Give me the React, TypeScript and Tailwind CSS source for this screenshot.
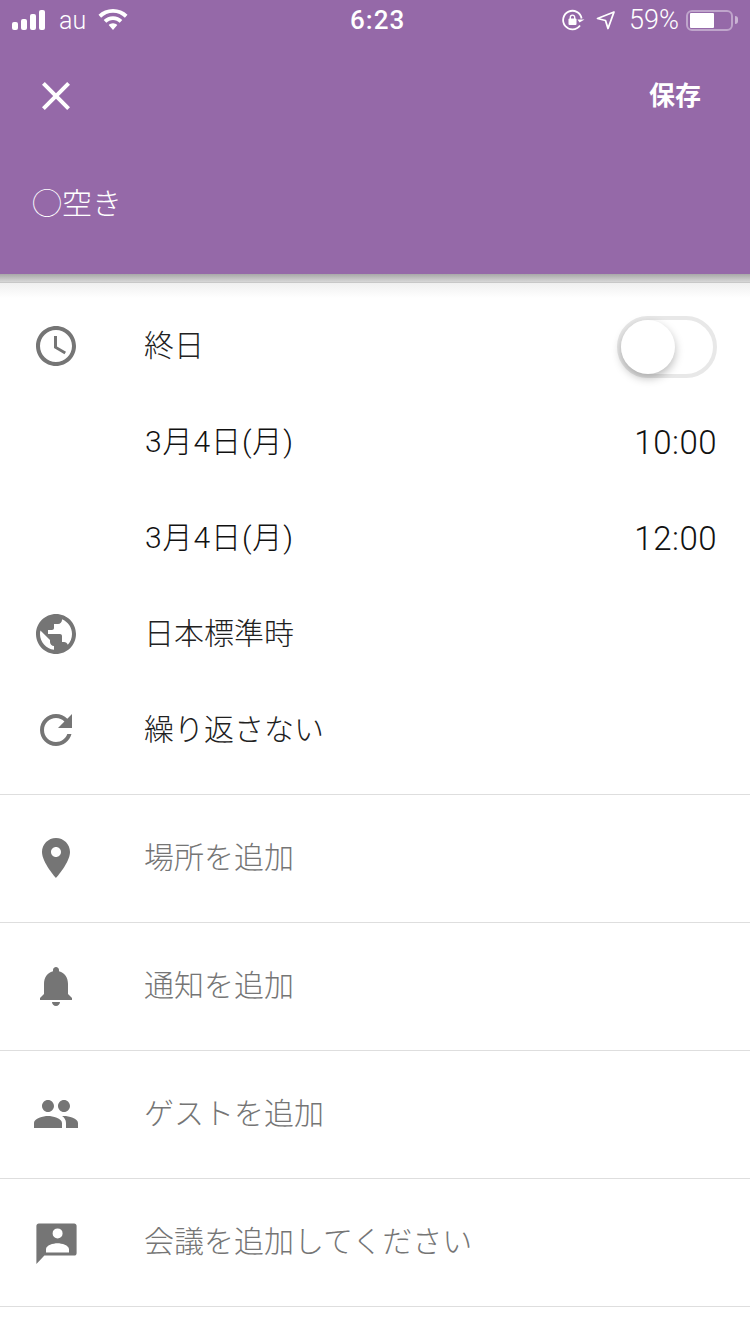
import React from "react";

const font = "font-['Roboto','Noto_Sans_CJK_JP',sans-serif]";

const paths = {
  clock:
    "M11.99 2C6.47 2 2 6.48 2 12s4.47 10 9.99 10C17.52 22 22 17.52 22 12S17.52 2 11.99 2zM12 20c-4.42 0-8-3.58-8-8s3.58-8 8-8 8 3.58 8 8-3.58 8-8 8zM12.5 7H11v6l5.25 3.15.75-1.23-4.5-2.67z",
  globe:
    "M12 2C6.48 2 2 6.48 2 12s4.48 10 10 10 10-4.48 10-10S17.52 2 12 2zm-1 17.93c-3.95-.49-7-3.85-7-7.93 0-.62.08-1.21.21-1.79L9 15v1c0 1.1.9 2 2 2v1.93zm6.9-2.54c-.26-.81-1-1.39-1.9-1.39h-1v-3c0-.55-.45-1-1-1H8v-2h2c.55 0 1-.45 1-1V7h2c1.1 0 2-.9 2-2v-.41c2.93 1.19 5 4.06 5 7.41 0 2.08-.8 3.97-2.1 5.39z",
  refresh:
    "M17.65 6.35C16.2 4.9 14.21 4 12 4c-4.42 0-7.99 3.58-7.99 8s3.57 8 7.99 8c3.73 0 6.84-2.55 7.73-6h-2.08c-.82 2.33-3.04 4-5.65 4-3.31 0-6-2.69-6-6s2.69-6 6-6c1.66 0 3.14.69 4.22 1.78L13 11h7V4l-2.35 2.35z",
  place:
    "M12 2C8.13 2 5 5.13 5 9c0 5.25 7 13 7 13s7-7.75 7-13c0-3.87-3.13-7-7-7zm0 9.5c-1.38 0-2.5-1.12-2.5-2.5s1.12-2.5 2.5-2.5 2.5 1.12 2.5 2.5-1.12 2.5-2.5 2.5z",
  bell:
    "M12 22c1.1 0 2-.9 2-2h-4c0 1.1.89 2 2 2zm6-6v-5c0-3.07-1.64-5.64-4.5-6.32V4c0-.83-.67-1.5-1.5-1.5s-1.5.67-1.5 1.5v.68C7.63 5.36 6 7.92 6 11v5l-2 2v1h16v-1l-2-2z",
  people:
    "M16 11c1.66 0 2.99-1.34 2.99-3S17.66 5 16 5c-1.66 0-3 1.34-3 3s1.34 3 3 3zm-8 0c1.66 0 2.99-1.34 2.99-3S9.66 5 8 5C6.34 5 5 6.34 5 8s1.34 3 3 3zm0 2c-2.33 0-7 1.17-7 3.5V19h14v-2.5c0-2.33-4.67-3.5-7-3.5zm8 0c-.29 0-.62.02-.97.05 1.16.84 1.97 1.97 1.97 3.45V19h6v-2.5c0-2.33-4.67-3.5-7-3.5z",
  meet:
    "M3.4 2.7h17.7c.7 0 1.2.5 1.2 1.2v13.7c0 .7-.5 1.2-1.2 1.2H6.2L2.2 23V3.9c0-.7.5-1.2 1.2-1.2zM12.8 5.2a2.5 2.5 0 1 0 0 5 2.5 2.5 0 0 0 0-5zM7 17.2h11.5v-1.6c0-2-3.6-3-5.75-3S7 13.600 7 15.600z",
};

function Icon({ d }: { d: string }) {
  return (
    <svg viewBox="0 0 24 24" className="h-12 w-12 shrink-0 fill-[#757575]" fillRule="evenodd">
      <path d={d} />
    </svg>
  );
}

function Row({ icon, text, right }: { icon?: string; text: string; right?: React.ReactNode }) {
  return (
    <div className="flex h-24 items-center pl-8 pr-[33px]">
      <div className="h-12 w-12 shrink-0">{icon && <Icon d={icon} />}</div>
      <div className="ml-[64px] flex-1 text-[30px] leading-none font-light text-[#212121]">
        {text}
      </div>
      {right}
    </div>
  );
}

function AddRow({ icon, text }: { icon: string; text: string }) {
  return (
    <div className="flex h-[128px] items-center border-b border-[#dedede] pb-[1px] pl-8">
      <Icon d={icon} />
      <div className="ml-[64px] text-[30px] leading-none font-light text-[#757575]">{text}</div>
    </div>
  );
}

function DateRow({ time }: { time: string }) {
  return (
    <div className="flex h-24 items-center pl-8 pr-[33px]">
      <div className="ml-[113px] flex-1 text-[30px] leading-none font-light tracking-[0.9px] text-[#111111]">
        3月4日(月)
      </div>
      <span className="mt-[1px] text-[33px] leading-none font-light tracking-[0.5px] text-[#111111]">
        {time}
      </span>
    </div>
  );
}

function StatusBar() {
  return (
    <div className="relative flex h-10 items-center justify-between pl-3 pr-[12px] text-white">
      <div className="flex items-center">
        <div className="flex items-end gap-[3px]">
          <div className="h-[8px] w-[6px] rounded-[2px] bg-white" />
          <div className="h-[11px] w-[6px] rounded-[2px] bg-white" />
          <div className="h-[16px] w-[6px] rounded-[2px] bg-white" />
          <div className="h-[20px] w-[6px] rounded-[2px] bg-white" />
        </div>
        <span className="ml-[14px] text-[25px] leading-none font-light">au</span>
        <svg viewBox="0 0 30 22" className="ml-[12px] h-[22px] w-[30px] fill-white">
          <path d="M15 0C9.300 0 4.200 2.200.5 5.800l2.600 2.900C6.200 5.600 10.400 3.700 15 3.700s8.800 1.900 11.900 5l2.600-2.900C25.800 2.200 20.700 0 15 0z" />
          <path d="M15 7.200c-3.600 0-6.900 1.500-9.300 3.800l2.600 2.800c1.700-1.700 4.100-2.800 6.700-2.800s5 1.100 6.700 2.800l2.600-2.800c-2.400-2.300-5.700-3.800-9.300-3.800z" />
          <path d="M15 14.300c-1.700 0-3.200.7-4.300 1.700L15 21l4.300-5c-1.100-1-2.600-1.700-4.300-1.700z" />
        </svg>
      </div>
      <span className="absolute left-[350px] text-[26px] leading-none font-medium tracking-[1px]">
        6:23
      </span>
      <div className="flex items-center">
        <svg viewBox="0 0 24 24" className="h-6 w-6 fill-none stroke-white stroke-[1.8]">
          <path d="M20.600 10.500A9.300 9.300 0 1 0 19 17.500" />
          <path d="M18.500 14.500l5-3h-7z" className="fill-white stroke-none" />
          <rect x="7.500" y="10.500" width="8" height="6.500" rx="1" className="fill-white stroke-none" />
          <path d="M9.300 11V9.300a2.200 2.200 0 0 1 4.400 0V11" className="stroke-[1.400]" />
        </svg>
        <svg viewBox="0 0 20 20" className="ml-[11px] h-5 w-5 fill-none stroke-white stroke-[1.8]">
          <path d="M18 2L1.500 8.500l8 2 2.500 8z" strokeLinejoin="round" />
        </svg>
        <span className="ml-[13px] text-[27px] leading-none font-light">59%</span>
        <div className="ml-[7px] flex h-[21px] w-[47px] items-center rounded-[6px] border-2 border-white/40 pl-[2px]">
          <div className="h-[15px] w-6 rounded-[1px] bg-white" />
        </div>
        <div className="ml-[2px] h-2 w-[3px] rounded-r-full bg-white/50" />
      </div>
    </div>
  );
}

function Toggle() {
  return (
    <div className="mt-[2px] flex h-[62px] w-[100px] items-center rounded-full border-4 border-[#e8e8e8] bg-white">
      <div className="h-[54px] w-[54px] rounded-full bg-white shadow-[0_4px_10px_rgba(0,0,0,0.28)]" />
    </div>
  );
}

export default function App() {
  return (
    <div className={`h-[1334px] w-[750px] overflow-hidden bg-white ${font}`}>
      <div className="relative z-10 h-[274px] bg-[#9569a8] text-white">
        <StatusBar />
        <div className="flex h-28 items-center justify-between pl-[32px] pr-[49px]">
          <svg viewBox="0 0 24 24" className="h-12 w-12 fill-white">
            <path d="M19 6.410L17.590 5 12 10.590 6.410 5 5 6.410 10.590 12 5 17.590 6.410 19 12 13.410 17.590 19 19 17.590 13.410 12z" />
          </svg>
          <span className="text-[26px] leading-none font-bold">保存</span>
        </div>
        <div className="pl-8 pt-[37px] text-[30px] leading-none font-light">◯空き</div>
      </div>
      <div className="h-2 bg-gradient-to-b from-[#a8a8a8] to-[#d8d8d8]" />
      <div className="h-[1px] bg-[#c8c8c8]" />
      <div className="h-[15px] bg-gradient-to-b from-[#f0f0f0] to-white" />

      <Row icon={paths.clock} text="終日" right={<Toggle />} />
      <DateRow time="10:00" />
      <DateRow time="12:00" />
      <Row icon={paths.globe} text="日本標準時" />
      <Row icon={paths.refresh} text="繰り返さない" />
      <div className="h-[17px] border-b border-[#dedede]" />
      <AddRow icon={paths.place} text="場所を追加" />
      <AddRow icon={paths.bell} text="通知を追加" />
      <AddRow icon={paths.people} text="ゲストを追加" />
      <AddRow icon={paths.meet} text="会議を追加してください" />
    </div>
  );
}
